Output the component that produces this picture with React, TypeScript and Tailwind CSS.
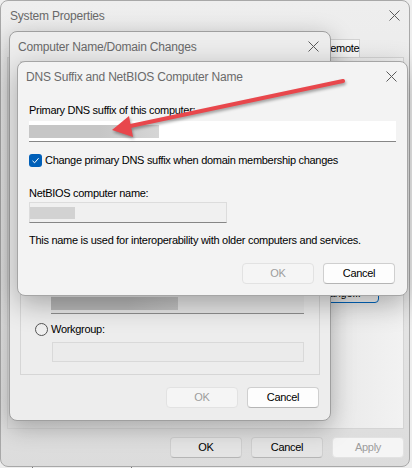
import React from "react";

const font = "font-['Liberation_Sans',Arial,sans-serif]";

function CloseIcon() {
  return (
    <svg width="11" height="11" viewBox="0 0 11 11" className="block">
      <path d="M0.5 0.5 L10.5 10.5 M10.5 0.5 L0.5 10.5" stroke="#5a5a5a" strokeWidth="1" fill="none" />
    </svg>
  );
}

function WinButton({
  label,
  disabled,
  dim,
  className = "",
}: {
  label: string;
  disabled?: boolean;
  dim?: boolean;
  className?: string;
}) {
  if (disabled) {
    return (
      <div
        className={`flex h-[21px] w-[72px] items-center justify-center rounded-[4px] border border-[#e2e2e2] bg-[#f5f5f5] text-[11px] tracking-[-0.3px] text-[#9d9d9d] ${className}`}
      >
        {label}
      </div>
    );
  }
  return (
    <div
      className={`flex h-[21px] w-[72px] items-center justify-center rounded-[4px] border border-[#cfcfcf] border-b-[#b5b5b5] text-[11px] tracking-[-0.3px] text-black ${
        dim ? "bg-[#e4e4e4] border-[#b9b9b9]" : "bg-[#fdfdfd]"
      } ${className}`}
    >
      {label}
    </div>
  );
}

function TitleBar({ title, pl, pr }: { title: string; pl: string; pr: string }) {
  return (
    <div className={`flex h-[29px] items-center justify-between ${pl} ${pr}`}>
      <span className="text-[12px] tracking-[-0.2px] text-[#6a6a6a]">{title}</span>
      <CloseIcon />
    </div>
  );
}

export default function App() {
  return (
    <div className={`relative h-[468px] w-[412px] overflow-hidden bg-[#eeeeee] ${font}`}>
      {/* desktop behind, bits of lines peeking out under the window */}
      <div className="absolute bottom-0 left-[32px] h-[3px] w-px bg-[#7a7a7a]" />
      <div className="absolute bottom-0 left-[131px] h-[3px] w-px bg-[#7a7a7a]" />

      {/* System Properties */}
      <div className="absolute left-0 top-0 flex h-[467px] w-[410px] flex-col overflow-hidden rounded-[8px] border border-[#a8a8a8] bg-[linear-gradient(180deg,#eeeeee_0%,#e6e6e6_60%,#dcdcdc_100%)]">
        <TitleBar title="System Properties" pl="pl-[9px]" pr="pr-[9px]" />
        <div className="mt-[9px] flex pl-[321px]">
          <div className="flex h-[18px] w-[38px] items-center justify-center border border-b-0 border-[#d2d2d2] bg-[#f9f9f9] text-[11px] tracking-[-0.3px]">
            Remote
          </div>
        </div>
        <div className="ml-[6px] h-[372px] w-[397px] border border-[#d4d4d4] bg-[linear-gradient(90deg,#dedede_0%,#e9e9e9_82%,#f2f2f2_100%)]">
          <div className="flex justify-end pr-[24px] pt-[223px]">
            <div className="flex h-[22px] w-[86px] items-end justify-center rounded-[4px] border border-[#0067c0] bg-[#f4f4f4] pb-[3px] pl-[4px] text-[11px] leading-[12px] tracking-[-0.3px]">
              Change...
            </div>
          </div>
        </div>
        <div className="mt-[8px] flex justify-end gap-[9px] pr-[5px]">
          <WinButton label="OK" dim />
          <WinButton label="Cancel" dim />
          <WinButton label="Apply" disabled className="bg-[#ebebeb]" />
        </div>
      </div>

      {/* Computer Name/Domain Changes */}
      <div className="absolute left-[9px] top-[31px] flex h-[390px] w-[322px] flex-col rounded-[8px] border border-[#9f9f9f] bg-[#ededed] shadow-[0_6px_24px_rgba(0,0,0,0.28)]">
        <TitleBar title="Computer Name/Domain Changes" pl="pl-[8px]" pr="pr-[11px]" />
        <div className="flex flex-1 flex-col px-[10px] pb-[12px]">
          <div className="flex flex-1 flex-col justify-end border border-[#d6d6d6] pb-[12px] pl-[14px] pr-[15px]">
            <div className="ml-[16px] flex h-[20px] items-center border-b border-[#8d8d8d] bg-[#e6e6e6]">
              <div className="h-[13px] w-[127px] bg-[linear-gradient(90deg,#b8b8b8_60%,#c4c4c4_100%)]" />
            </div>
            <div className="mt-[8px] flex h-[14px] items-center">
              <div className="h-[13px] w-[13px] rounded-full border border-[#555555] bg-[#f0f0f0]" />
              <span className="ml-[3px] text-[11px] tracking-[-0.3px]">Workgroup:</span>
            </div>
            <div className="ml-[17px] mt-[6px] h-[20px] border border-[#d9d9d9] bg-[#ebebeb]" />
          </div>
          <div className="mt-[12px] flex justify-end gap-[9px] pr-[1px]">
            <WinButton label="OK" disabled />
            <WinButton label="Cancel" />
          </div>
        </div>
      </div>

      {/* DNS Suffix and NetBIOS Computer Name */}
      <div className="absolute left-[17px] top-[61px] flex h-[235px] w-[391px] flex-col rounded-[8px] border border-[#a5a5a5] bg-[#f3f3f3] shadow-[0_8px_28px_rgba(0,0,0,0.3)]">
        <TitleBar title="DNS Suffix and NetBIOS Computer Name" pl="pl-[8px]" pr="pr-[10px]" />
        <div className="flex flex-col px-[11px]">
          <div className="mt-[12px] h-[14px] text-[11px] leading-[14px] tracking-[-0.3px]">
            Primary DNS suffix of this computer:
          </div>
          <div className="mt-[4px] flex h-[21px] w-[367px] items-center border-b border-[#868686] bg-white">
            <div className="h-[13px] w-[130px] bg-[linear-gradient(90deg,#c6c6c6_55%,#d6d6d6_100%)]" />
          </div>
          <div className="mt-[11px] flex h-[14px] items-center">
            <div className="flex h-[13px] w-[13px] items-center justify-center rounded-[3px] bg-[#005fb8]">
              <svg width="9" height="9" viewBox="0 0 9 9">
                <path d="M1.5 4.8 L3.6 6.8 L7.6 2.2" stroke="white" strokeWidth="1" fill="none" />
              </svg>
            </div>
            <span className="ml-[3px] text-[11px] tracking-[-0.3px]">
              Change primary DNS suffix when domain membership changes
            </span>
          </div>
          <div className="mt-[19px] h-[14px] text-[11px] leading-[14px] tracking-[-0.3px]">
            NetBIOS computer name:
          </div>
          <div className="mt-[2px] flex h-[21px] w-[198px] items-center border border-[#dcdcdc] border-b-[#868686] bg-[#f0f0f0]">
            <div className="h-[12px] w-[45px] bg-[#d2d2d2]" />
          </div>
          <div className="mt-[10px] h-[14px] text-[11px] leading-[14px] tracking-[-0.28px]">
            This name is used for interoperability with older computers and services.
          </div>
          <div className="mt-[16px] flex justify-end gap-[9px] pr-[1px]">
            <WinButton label="OK" disabled />
            <WinButton label="Cancel" />
          </div>
        </div>
      </div>

      {/* red annotation arrow */}
      <svg
        className="pointer-events-none absolute left-0 top-0"
        width="412"
        height="468"
        viewBox="0 0 412 468"
        style={{ filter: "drop-shadow(1px 2px 1.5px rgba(0,0,0,0.35))" }}
      >
        <line x1="343" y1="81" x2="128" y2="126.5" stroke="#e8474c" strokeWidth="4" strokeLinecap="round" />
        <polygon points="112,130 133,137 129,116" fill="#e8474c" />
      </svg>
    </div>
  );
}
